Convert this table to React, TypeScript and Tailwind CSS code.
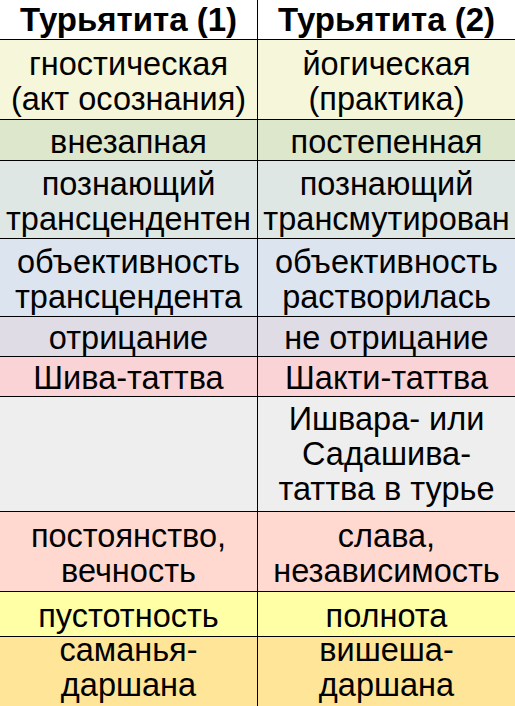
const rows: { left: string[]; right: string[]; bg: string; h: string; pad: string }[] = [
  { left: ["гностическая", "(акт осознания)"], right: ["йогическая", "(практика)"], bg: "bg-[#f6f6da]", h: "h-[80px]", pad: "pt-[4px]" },
  { left: ["внезапная"], right: ["постепенная"], bg: "bg-[#dde7cb]", h: "h-[41px]", pad: "pt-[4px]" },
  { left: ["познающий", "трансцендентен"], right: ["познающий", "трансмутирован"], bg: "bg-[#dfe7e5]", h: "h-[78px]", pad: "pt-[4px]" },
  { left: ["объективность", "трансцендента"], right: ["объективность", "растворилась"], bg: "bg-[#dce4ef]", h: "h-[78px]", pad: "pt-[4px]" },
  { left: ["отрицание"], right: ["не отрицание"], bg: "bg-[#dfdce6]", h: "h-[40px]", pad: "pt-[4px]" },
  { left: ["Шива-таттва"], right: ["Шакти-таттва"], bg: "bg-[#f9d3d6]", h: "h-[40px]", pad: "pt-[4px]" },
  { left: [], right: ["Ишвара- или", "Садашива-", "таттва в турье"], bg: "bg-[#eeeeee]", h: "h-[115px]", pad: "" },
  { left: ["постоянство,", "вечность"], right: ["слава,", "независимость"], bg: "bg-[#ffd8cf]", h: "h-[80px]", pad: "pt-[4px]" },
  { left: ["пустотность"], right: ["полнота"], bg: "bg-[#ffffa6]", h: "h-[45px]", pad: "pt-[4px]" },
];

const Cell = ({ lines, className }: { lines: string[]; className: string }) => (
  <div className={`flex flex-col items-center justify-center text-center ${className}`}>
    {lines.map((l, i) => (
      <span key={i} className="whitespace-nowrap">{l}</span>
    ))}
  </div>
);

const App = () => {
  return (
    <div className="w-[515px] h-[706px] bg-white text-black font-['Liberation_Sans',Arial,sans-serif] text-[32.5px] leading-[35px] overflow-hidden">
      {/* Header */}
      <div className="grid grid-cols-[258px_1fr] h-[40px] border-b border-black font-bold text-[33px]">
        <Cell lines={["Турьятита (1)"]} className="border-r border-black" />
        <Cell lines={["Турьятита (2)"]} className="" />
      </div>

      {rows.map((r, i) => (
        <div key={i} className={`grid grid-cols-[258px_1fr] border-b border-black ${r.bg} ${r.h}`}>
          <Cell lines={r.left} className={`border-r border-black ${r.pad}`} />
          <Cell lines={r.right} className={r.pad} />
        </div>
      ))}

      {/* last row, runs past the bottom edge */}
      <div className="grid grid-cols-[258px_1fr] bg-[#ffe597] h-[70px]">
        <div className="flex flex-col items-center border-r border-black text-center">
          <span className="-mt-[4px] whitespace-nowrap">саманья-</span>
          <span className="whitespace-nowrap">даршана</span>
        </div>
        <div className="flex flex-col items-center text-center">
          <span className="-mt-[4px] whitespace-nowrap">вишеша-</span>
          <span className="whitespace-nowrap">даршана</span>
        </div>
      </div>
    </div>
  );
};

export default App;
